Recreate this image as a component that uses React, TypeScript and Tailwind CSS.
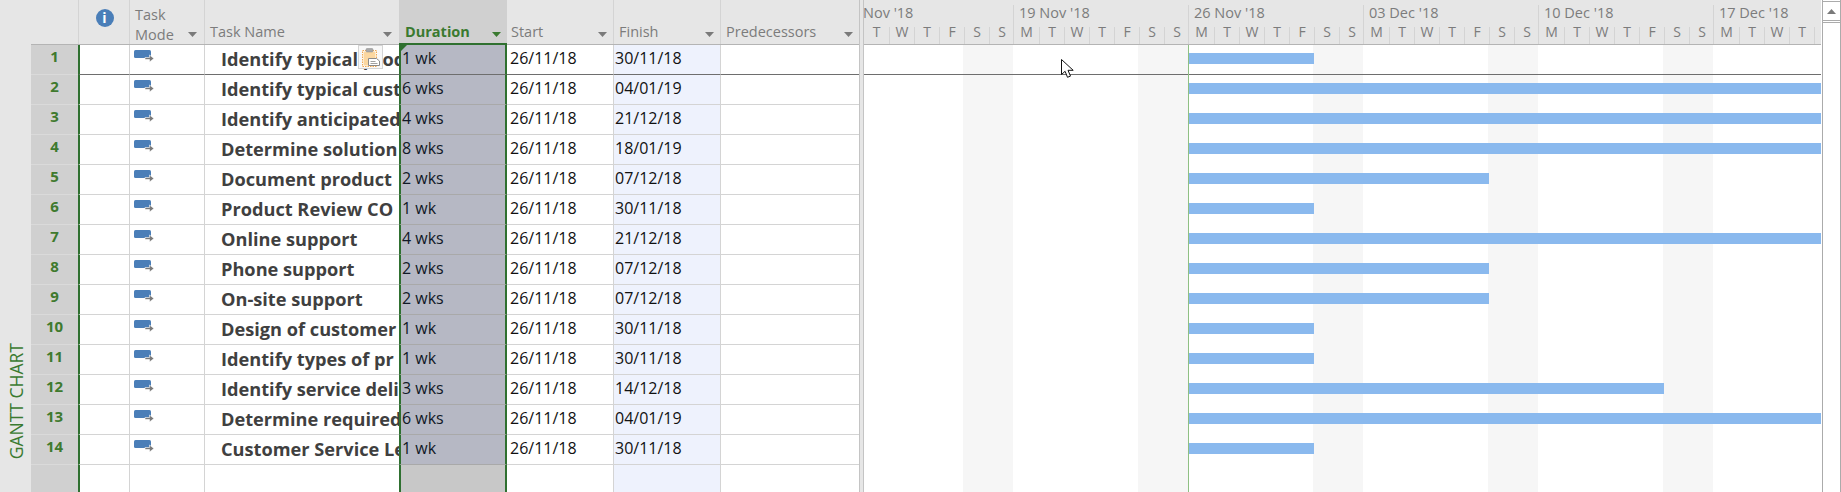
import React from 'react';

const tasks = [
  { id: 1, name: 'Identify typical product', duration: '1 wk', finish: '30/11/18', width: 125 },
  { id: 2, name: 'Identify typical customer', duration: '6 wks', finish: '04/01/19', width: 632 },
  { id: 3, name: 'Identify anticipated', duration: '4 wks', finish: '21/12/18', width: 632 },
  { id: 4, name: 'Determine solution', duration: '8 wks', finish: '18/01/19', width: 632 },
  { id: 5, name: 'Document product', duration: '2 wks', finish: '07/12/18', width: 300 },
  { id: 6, name: 'Product Review CO', duration: '1 wk', finish: '30/11/18', width: 125 },
  { id: 7, name: 'Online support', duration: '4 wks', finish: '21/12/18', width: 632 },
  { id: 8, name: 'Phone support', duration: '2 wks', finish: '07/12/18', width: 300 },
  { id: 9, name: 'On-site support', duration: '2 wks', finish: '07/12/18', width: 300 },
  { id: 10, name: 'Design of customer', duration: '1 wk', finish: '30/11/18', width: 125 },
  { id: 11, name: 'Identify types of pr', duration: '1 wk', finish: '30/11/18', width: 125 },
  { id: 12, name: 'Identify service deli', duration: '3 wks', finish: '14/12/18', width: 475 },
  { id: 13, name: 'Determine required', duration: '6 wks', finish: '04/01/19', width: 632 },
  { id: 14, name: 'Customer Service Le', duration: '1 wk', finish: '30/11/18', width: 125 },
];

const weeks = [
  { label: "Nov '18", width: 'w-[149px]', days: ['T', 'W', 'T', 'F', 'S', 'S'], first: true },
  { label: "19 Nov '18", width: 'w-[175px]', days: ['M', 'T', 'W', 'T', 'F', 'S', 'S'] },
  { label: "26 Nov '18", width: 'w-[175px]', days: ['M', 'T', 'W', 'T', 'F', 'S', 'S'] },
  { label: "03 Dec '18", width: 'w-[175px]', days: ['M', 'T', 'W', 'T', 'F', 'S', 'S'] },
  { label: "10 Dec '18", width: 'w-[175px]', days: ['M', 'T', 'W', 'T', 'F', 'S', 'S'] },
  { label: "17 Dec '18", width: 'w-[108px]', days: ['M', 'T', 'W', 'T'] },
];

function FilterArrow({ color = '#7a7a7a' }: { color?: string }) {
  return (
    <svg width="9" height="5" viewBox="0 0 9 5" className="shrink-0">
      <path d="M0 0h9L4.5 5z" fill={color} />
    </svg>
  );
}

function ModeIcon() {
  return (
    <svg width="20" height="13" viewBox="0 0 20 13" className="block">
      <rect x="0" y="0" width="17" height="8" rx="1.5" fill="#4a7eb8" />
      <path d="M11 7.5h4.5V5l4.5 3.5-4.5 3.5V9.5H11z" fill="#7a7a7a" stroke="#fff" strokeWidth="0.6" />
    </svg>
  );
}

function PasteIcon() {
  return (
    <div className="absolute left-[153px] top-0 flex h-[24px] w-[25px] items-center justify-center border border-[#d4d4d4] bg-[#f8f8f8]">
      <svg width="21" height="21" viewBox="0 0 21 21">
        <rect x="2.5" y="3.5" width="14" height="16" fill="#fff" stroke="#f0a850" strokeDasharray="1.5 1" />
        <rect x="3.5" y="4.5" width="12" height="14" fill="#fbd7a0" />
        <rect x="6" y="1.5" width="7" height="3.5" rx="1" fill="#a8a8a8" stroke="#8a8a8a" strokeWidth="0.5" />
        <path d="M8.5 11.5h8l3 2.5v4.5h-11z" fill="#fff" stroke="#8a8a8a" />
        <path d="M10.5 14.5h5M10.5 16.5h7" stroke="#a0a0a0" />
      </svg>
    </div>
  );
}

function CursorIcon() {
  return (
    <svg width="14" height="20" viewBox="0 0 14 20" className="absolute left-[197px] top-[14px]">
      <path d="M.5.5v15l3.6-3.2 2.4 6 3-1.2-2.5-5.8h5.2z" fill="#fff" stroke="#111" strokeWidth="1" />
    </svg>
  );
}

function TableHeader() {
  return (
    <div className="flex h-[45px] shrink-0 border-b border-[#b4b4b4] bg-[#e6e6e6] text-[14.5px] leading-[20px] text-[#7c7c7c]">
      <div className="w-[47px] shrink-0" />
      <div className="flex w-[51px] shrink-0 items-center justify-center border-l border-[#d4d4d4] pb-[8px] pl-[1px]">
        <div className="flex h-[18px] w-[18px] items-center justify-center rounded-full bg-[#4a7eb8] font-bold text-[14px] leading-none text-white">
          i
        </div>
      </div>
      <div className="flex w-[75px] shrink-0 justify-between border-l border-[#d4d4d4] pl-[5px] pr-[7px] pt-[5px]">
        <span>
          Task
          <br />
          Mode
        </span>
        <span className="mt-[27px]">
          <FilterArrow />
        </span>
      </div>
      <div className="flex w-[195px] shrink-0 justify-between border-l border-[#d4d4d4] pl-[5px] pr-[7px] pt-[22px]">
        <span>Task Name</span>
        <span className="mt-[10px]">
          <FilterArrow />
        </span>
      </div>
      <div className="-mb-px flex w-[108px] shrink-0 justify-between border-b-2 border-[#2f7030] bg-[#d0d0d0] pl-[6px] pr-[6px] pt-[22px] font-bold text-[#3a7a30]">
        <span>Duration</span>
        <span className="mt-[10px]">
          <FilterArrow color="#3a7a30" />
        </span>
      </div>
      <div className="flex w-[106px] shrink-0 justify-between pl-[4px] pr-[6px] pt-[22px]">
        <span>Start</span>
        <span className="mt-[10px]">
          <FilterArrow />
        </span>
      </div>
      <div className="flex w-[107px] shrink-0 justify-between border-l border-[#d4d4d4] pl-[5px] pr-[6px] pt-[22px]">
        <span>Finish</span>
        <span className="mt-[10px]">
          <FilterArrow />
        </span>
      </div>
      <div className="flex w-[139px] shrink-0 justify-between border-l border-[#d4d4d4] pl-[5px] pr-[6px] pt-[22px]">
        <span>Predecessors</span>
        <span className="mt-[10px]">
          <FilterArrow />
        </span>
      </div>
    </div>
  );
}

function TableRow({ task }: { task: (typeof tasks)[number] }) {
  const line = task.id === 1 ? 'border-[#6e6e6e]' : 'border-[#d4d4d4]';
  const durationLine = task.id === 1 ? 'border-b-[#6e6e6e]' : 'border-b-[#a9a9a9]';

  return (
    <div className="flex h-[30px] shrink-0">
      <div className="w-[47px] shrink-0 border-b border-[#dadada] bg-[#d0d0d0] pr-[2px] pt-[1px] text-center text-[15px] font-bold leading-[20px] text-[#3f7a2e]">
        <span className="block pl-[2px]">{task.id}</span>
      </div>
      <div className={`w-[51px] shrink-0 border-b border-l-2 ${line} border-l-[#2f7030]`} />
      <div className={`w-[75px] shrink-0 border-b border-l pl-[4px] pt-[5px] ${line} border-l-[#d4d4d4]`}>
        <ModeIcon />
      </div>
      <div className={`relative w-[195px] shrink-0 overflow-hidden whitespace-nowrap border-b border-l pl-[16px] text-[18.2px] font-bold leading-[29px] text-[#404040] ${line} border-l-[#d4d4d4]`}>
        {task.name}
        {task.id === 1 && <PasteIcon />}
      </div>
      <div className={`relative w-[108px] shrink-0 border-x-2 border-b border-x-[#2f7030] bg-[#b6b8c4] pl-[1px] text-[16px] leading-[27px] text-[#111827] ${durationLine}`}>
        {task.duration}
        {task.id === 1 && (
          <svg width="6" height="6" viewBox="0 0 6 6" className="absolute left-0 top-0">
            <path d="M0 0h6L0 6z" fill="#2f7030" />
          </svg>
        )}
      </div>
      <div className={`w-[106px] shrink-0 border-b pl-[3px] text-[16px] leading-[27px] text-[#111] ${line}`}>26/11/18</div>
      <div className={`w-[107px] shrink-0 border-b border-l bg-[#eef2fd] pl-[1px] text-[16px] leading-[27px] text-[#111] ${line} border-l-[#d4d4d4]`}>
        {task.finish}
      </div>
      <div className={`w-[139px] shrink-0 border-b border-l ${line} border-l-[#d4d4d4]`} />
    </div>
  );
}

function TableFiller() {
  return (
    <div className="flex flex-1">
      <div className="w-[47px] shrink-0 bg-[#d0d0d0]" />
      <div className="w-[51px] shrink-0 border-l-2 border-[#2f7030]" />
      <div className="w-[75px] shrink-0 border-l border-[#d4d4d4]" />
      <div className="w-[195px] shrink-0 border-l border-[#d4d4d4]" />
      <div className="w-[108px] shrink-0 border-x-2 border-[#2f7030] bg-[#c8c8c8]" />
      <div className="w-[106px] shrink-0" />
      <div className="w-[107px] shrink-0 border-l border-[#d4d4d4] bg-[#eef2fd]" />
      <div className="w-[139px] shrink-0 border-l border-[#d4d4d4]" />
    </div>
  );
}

function GanttHeader() {
  return (
    <div className="flex h-[45px] shrink-0 border-b border-[#b4b4b4] bg-[#e6e6e6] text-[14.5px] text-[#7c7c7c]">
      {weeks.map((week) => (
        <div key={week.label} className={`${week.width} shrink-0 pt-[5px]`}>
          <div className={`flex h-[39px] flex-col justify-between ${week.first ? '' : 'border-l border-[#d4d4d4]'}`}>
            <div className={`leading-[14px] ${week.first ? '-ml-px pt-[1px]' : 'pl-[5px] pt-[1px]'}`}>{week.label}</div>
            <div className="flex h-[17px]">
              {week.days.map((day, i) => (
                <div key={i} className="h-[17px] w-[25px] shrink-0 text-center text-[14px] leading-[10px] not-first:border-l not-first:border-[#d4d4d4]">
                  {day}
                </div>
              ))}
              {week.days.length === 4 && <div className="w-[8px] border-l border-[#d4d4d4]" />}
            </div>
          </div>
        </div>
      ))}
    </div>
  );
}

function GanttBody() {
  return (
    <div className="relative flex-1 overflow-hidden bg-white">
      {/* weekend shading */}
      <div className="absolute inset-0 flex gap-[125px] pl-[99px]">
        {[0, 1, 2, 3, 4].map((i) => (
          <div key={i} className="w-[50px] shrink-0 bg-[#f6f6f6]" />
        ))}
      </div>
      <div className="relative">
        {tasks.map((task) => (
          <div key={task.id} className={`h-[30px] pt-[8px] ${task.id === 1 ? 'border-b border-[#6e6e6e]' : ''}`}>
            <div className="ml-[325px] h-[11px] bg-[#8ab9ee]" style={{ width: task.width }} />
          </div>
        ))}
      </div>
      {/* today line */}
      <div className="absolute bottom-0 left-[324px] top-0 w-px bg-[#8fc083]" />
      <CursorIcon />
    </div>
  );
}

function ScrollBar() {
  return (
    <div className="ml-px flex w-[19px] shrink-0 flex-col border-x border-[#ababab] pt-px">
      <div className="flex h-[20px] shrink-0 items-center justify-center border-y border-[#ababab] bg-white">
        <svg width="9" height="5" viewBox="0 0 9 5">
          <path d="M0 5h9L4.5 0z" fill="#7a7a7a" />
        </svg>
      </div>
      <div className="mt-px flex-1 border-t border-[#ababab] bg-white" />
    </div>
  );
}

export default function App() {
  return (
    <div className="flex h-[492px] w-[1841px] overflow-hidden bg-white font-['Open_Sans','Noto_Sans',sans-serif]">
      <div className="flex w-[31px] shrink-0 flex-col items-center justify-end bg-[#e6e6e6] pb-[33px]">
        <span className="rotate-180 text-[17.5px] leading-[20px] text-[#3a7a30] [writing-mode:vertical-rl]">GANTT CHART</span>
      </div>

      <div className="flex w-[828px] shrink-0 flex-col">
        <TableHeader />
        {tasks.map((task) => (
          <TableRow key={task.id} task={task} />
        ))}
        <TableFiller />
      </div>

      <div className="w-[5px] shrink-0 border-x border-[#c4c4c4] bg-[#e6e6e6]" />

      <div className="flex w-[957px] shrink-0 flex-col overflow-hidden">
        <GanttHeader />
        <GanttBody />
      </div>

      <ScrollBar />
    </div>
  );
}
